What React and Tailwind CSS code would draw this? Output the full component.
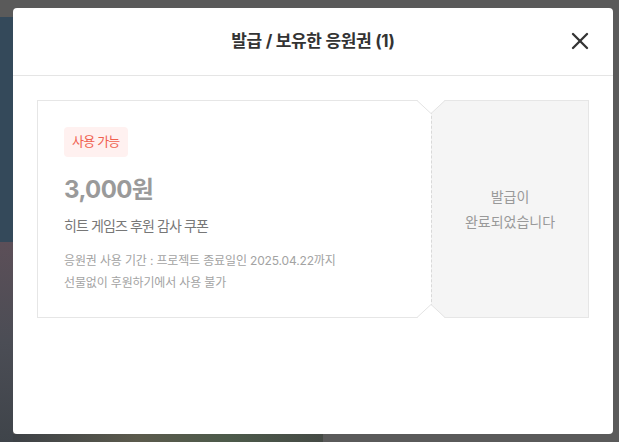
import { X } from "lucide-react";

const font = { fontFamily: '"Inter", "Noto Sans CJK KR", "Noto Sans", sans-serif' };

function Notch({ bottom }) {
  return (
    <svg
      width="28"
      height="14"
      viewBox="0 0 28 14"
      className={`absolute left-[-15px] ${bottom ? "bottom-[-1px] rotate-180" : "top-[-1px]"}`}
    >
      <polygon points="0,0 28,0 14,13.5" fill="#ffffff" />
      <polyline points="0,0.5 14,13.5 28,0.5" fill="none" stroke="#e3e3e3" strokeWidth="1" />
    </svg>
  );
}

function Coupon() {
  return (
    <div className="flex h-[218px] border border-[#e6e6e6]">
      <div className="flex-1 px-[26px] pt-[26px]">
        <span className="inline-flex h-[30px] items-center rounded-[4px] bg-[#fff1f0] px-2 text-[13px] tracking-[-0.8px] text-[#f0604f]">
          사용 가능
        </span>
        <div className="mt-[17px] text-[24px] font-bold leading-8 tracking-[-0.6px] text-[#9a9a9a]">3,000원</div>
        <div className="mt-[10px] text-[14px] leading-5 tracking-[-0.9px] text-[#777]">히트 게임즈 후원 감사 쿠폰</div>
        <div className="mt-[14px] text-[12px] leading-[22px] tracking-[-0.15px] text-[#a3a3a3]">
          <div>응원권 사용 기간 : 프로젝트 종료일인 2025.04.22까지</div>
          <div>선물없이 후원하기에서 사용 불가</div>
        </div>
      </div>
      <div className="relative flex w-[157px] items-center justify-center border-l border-dashed border-[#d9d9d9] bg-[#f5f5f5] text-center text-[14px] leading-[25px] text-[#999]">
        <Notch />
        <Notch bottom />
        <div>
          발급이
          <br />
          완료되었습니다
        </div>
      </div>
    </div>
  );
}

export default function App() {
  return (
    <div className="relative h-[442px] w-full overflow-hidden bg-[#5a5a5a]" style={font}>
      {/* dimmed page behind the dialog */}
      <div className="flex h-full">
        <div className="flex w-[13px] flex-col pt-[17px]">
          <div className="h-[225px] bg-[#34495a]" />
          <div className="flex-1 bg-[linear-gradient(180deg,#5c4f58,#4b4d55_50%,#3f444a)]" />
        </div>
        <div className="flex flex-1 flex-col">
          <div className="flex-1" />
          <div className="h-[8px] w-[310px] bg-[linear-gradient(90deg,#3d4146,#5b5a4c_40%,#4c5a4a_70%,#454a45)]" />
        </div>
      </div>

      <div className="absolute left-[13px] top-[8px] flex h-[426px] w-[600px] flex-col rounded-[4px] bg-white">
        <div className="relative flex h-[68px] items-center justify-center border-b border-[#e5e5e5]">
          <h2 className="text-[17px] font-bold tracking-[-0.3px] text-[#333]">발급 / 보유한 응원권 (1)</h2>
          <button className="absolute right-[19px] top-[19px] text-[#333]">
            <X size={28} strokeWidth={2} />
          </button>
        </div>
        <div className="px-6 pt-6">
          <Coupon />
        </div>
      </div>
    </div>
  );
}
